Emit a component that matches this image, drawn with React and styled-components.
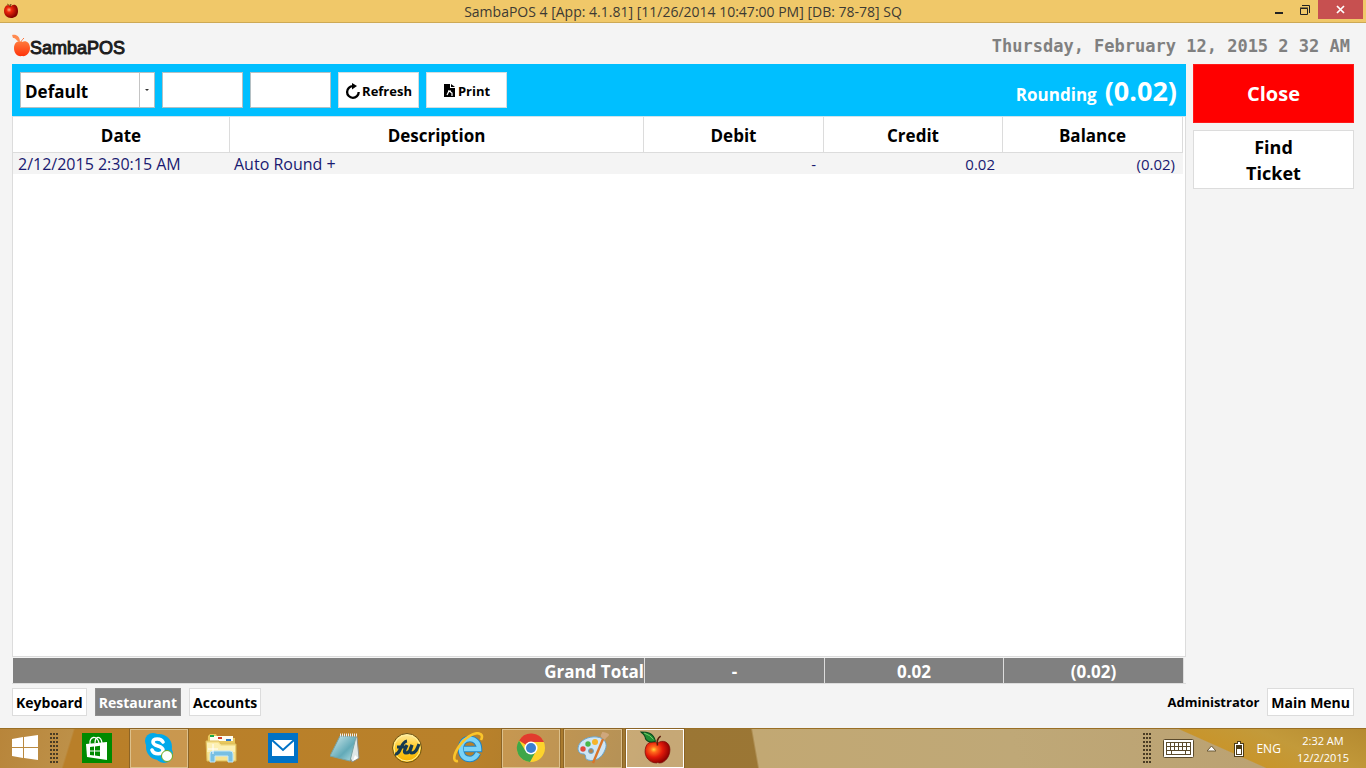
import React from "react";
import styled, { createGlobalStyle, css } from "styled-components";

const GlobalStyle = createGlobalStyle`
  * {
    box-sizing: border-box;
  }
  body {
    margin: 0;
    background: #f4f4f4;
    color: #000;
    font-family: "Open Sans", "Noto Sans", sans-serif;
  }
  button,
  input,
  select {
    font-family: inherit;
    margin: 0;
  }
`;

const Screen = styled.div`
  min-height: 100vh;
  display: flex;
  flex-direction: column;
`;

const TitleBar = styled.header`
  display: grid;
  grid-template-columns: 1fr auto 1fr;
  height: 23px;
  background: #f0c869;
  border-bottom: 1px solid #cda955;
`;

const TitleIcon = styled.div`
  padding: 3px;
  line-height: 0;
`;

const TitleText = styled.div`
  font-size: 14px;
  line-height: 23px;
  color: #3d3a33;
`;

const WindowButtons = styled.div`
  display: flex;
  justify-content: flex-end;
  padding-right: 3px;
`;

const WindowButton = styled.button`
  width: ${(p) => (p.$close ? 45 : 26)}px;
  height: 19px;
  padding: 0;
  border: none;
  background: ${(p) => (p.$close ? "#c75050" : "transparent")};
  line-height: 0;
`;

const Page = styled.main`
  flex: 1;
  display: flex;
  flex-direction: column;
  padding: 0 12px 12px;
`;

const BrandRow = styled.div`
  display: flex;
  justify-content: space-between;
  align-items: center;
  height: 41px;
`;

const Brand = styled.div`
  display: flex;
  align-items: center;
  padding-top: 4px;
`;

const BrandName = styled.span`
  font-family: "Liberation Sans", Arial, sans-serif;
  font-size: 18px;
  line-height: 24px;
  color: #1c1c1c;
  -webkit-text-stroke: 1px #1c1c1c;
  padding-top: 4px;
`;

const Clock = styled.div`
  font-family: "DejaVu Sans Mono", monospace;
  font-weight: bold;
  font-size: 17px;
  line-height: 20px;
  padding: 4px 4px 0 0;
  color: #808080;
`;

const Workspace = styled.div`
  flex: 1;
  display: flex;
  gap: 7px;
`;

const Account = styled.section`
  flex: 1;
  display: flex;
  flex-direction: column;
`;

const Side = styled.aside`
  width: 161px;
  display: flex;
  flex-direction: column;
  gap: 7px;
`;

const SideButton = styled.button`
  height: 59px;
  padding: 0 40px;
  font-size: 18px;
  line-height: 26px;
  font-weight: bold;
  color: #000;
  background: #fff;
  border: 1px solid #dcdcdc;
  ${(p) =>
    p.$danger &&
    css`
      font-size: 20px;
      color: #fff;
      background: #f00;
      border-color: #ff1a1a;
    `}
`;

const Toolbar = styled.div`
  display: flex;
  align-items: center;
  gap: 7px;
  height: 52px;
  padding: 0 8px;
  background: #00bfff;
`;

const SelectBox = styled.label`
  position: relative;
  display: flex;
`;

const Select = styled.select`
  appearance: none;
  width: 135px;
  height: 36px;
  padding: 2px 20px 0 4px;
  font-size: 17px;
  font-weight: bold;
  color: #000;
  border: 1px solid #b4c0c4;
  border-radius: 0;
  background: linear-gradient(#c4c4c4, #c4c4c4) right 14px top / 1px 100%
    no-repeat #fff;
`;

const Arrow = styled.span`
  position: absolute;
  right: 6px;
  top: 17px;
  border: 2px solid transparent;
  border-top-color: #333;
  pointer-events: none;
`;

const DateInput = styled.input`
  width: 81px;
  height: 36px;
  padding: 0 4px;
  font-size: 17px;
  background: #fff;
  border: 1px solid #b4c0c4;
`;

const ToolButton = styled.button`
  display: flex;
  align-items: center;
  justify-content: center;
  gap: 2px;
  width: 81px;
  height: 36px;
  padding: 1px 0 0;
  font-size: 13px;
  font-weight: bold;
  color: #000;
  background: #fff;
  border: 1px solid #d3dde0;
`;

const Summary = styled.div`
  display: flex;
  align-items: center;
  gap: 8px;
  margin-left: auto;
  padding: 2px 1px 0 0;
  color: #fff;
  font-size: 17px;
  line-height: 28px;
  font-weight: bold;
`;

const SummaryLabel = styled.span`
  padding-top: 8px;
`;

const Amount = styled.strong`
  font-size: 27px;
  font-weight: bold;
`;

const Sheet = styled.div`
  flex: 1;
  padding-right: 2px;
  background: #fff;
  border: 1px solid #dcdcdc;
  border-top-color: #cfe3ea;
`;

const Grid = styled.table`
  width: 100%;
  table-layout: fixed;
  border-collapse: separate;
  border-spacing: 0;
`;

const Col = styled.col`
  width: ${(p) => p.$w};
`;

const HeadCell = styled.th`
  height: 36px;
  padding: 3px 0 0;
  font-size: 17px;
  line-height: 24px;
  font-weight: bold;
  border-right: 1px solid #dcdcdc;
  border-bottom: 1px solid #dcdcdc;
`;

const Cell = styled.td`
  height: 21px;
  padding: 1px 8px 0 ${(p) => (p.$first ? 5 : 4)}px;
  font-size: ${(p) => (p.$number ? 15 : 16)}px;
  line-height: 20px;
  color: #191970;
  background: #f4f4f4;
  text-align: ${(p) => (p.$number ? "right" : "left")};
`;

const Totals = styled.div`
  margin-top: 1px;
  padding: 0 2px 0 1px;
  border-bottom: 1px solid #dcdcdc;
`;

const TotalCell = styled.td`
  height: 25px;
  padding: 2px 0 0;
  font-size: 17px;
  line-height: 23px;
  font-weight: bold;
  color: #fff;
  background: #808080;
  text-align: ${(p) => (p.$label ? "right" : "center")};
  border-right: 1px solid #dcdcdc;
`;

const BottomBar = styled.nav`
  display: flex;
  align-items: center;
  gap: 8px;
  margin-top: 4px;
`;

const NavButton = styled.button`
  height: 28px;
  padding: 1px 3px 0;
  font-size: 14px;
  line-height: 25px;
  font-weight: bold;
  color: ${(p) => (p.$active ? "#fff" : "#000")};
  background: ${(p) => (p.$active ? "#808080" : "#fff")};
  border: 1px solid ${(p) => (p.$active ? "#8c8c8c" : "#dcdcdc")};
`;

const User = styled.span`
  margin-left: auto;
  font-size: 13px;
  line-height: 28px;
  font-weight: bold;
`;

const Taskbar = styled.footer`
  display: flex;
  align-items: stretch;
  height: 40px;
  color: #fff;
  border-top: 1px solid #9a6f25;
  background: linear-gradient(
        24deg,
        transparent 32%,
        #c8952c 33%,
        #c39a3a 60%,
        #b58a30 100%
      )
      right / 190px 100% no-repeat,
    linear-gradient(
      80deg,
      transparent 746px,
      #c2a873 748px,
      #bfa877 1000px,
      #b99f70 100%
    ),
    linear-gradient(
      107deg,
      #b8853a 0,
      #bd9048 70px,
      #b97f29 72px,
      #b9812a 460px,
      #9b7634 630px,
      #9b7837 100%
    );
`;

const TaskButton = styled.button`
  display: flex;
  align-items: center;
  justify-content: center;
  width: ${(p) => (p.$start ? 50 : 58)}px;
  margin: ${(p) => (p.$start ? "0" : "0 3px 0 1px")};
  padding: 0 0 2px;
  background: transparent;
  border: 1px solid transparent;
  ${(p) =>
    p.$open &&
    css`
      background: rgba(255, 232, 200, 0.24);
      border-color: #dcc08c;
      outline: 1px solid #8c6426;
    `}
  ${(p) =>
    p.$current &&
    css`
      background: rgba(250, 230, 200, 0.45);
      border-color: #fff;
    `}
`;

const Grip = styled.div`
  align-self: center;
  width: 9px;
  height: 31px;
  margin-right: ${(p) => p.$gap}px;
  background: radial-gradient(circle at 1px 1px, #4a3c24 1px, transparent 1px) 0
    0 / 3px 4px;
`;

const Tray = styled.div`
  display: flex;
  align-items: center;
  margin-left: auto;
  padding-right: 17px;
  font-size: 12px;
  line-height: 17px;
`;

const TrayIcon = styled.span`
  line-height: 0;
  margin-right: ${(p) => p.$gap}px;
`;

const Language = styled.span`
  margin-right: 16px;
`;

const TrayClock = styled.div`
  font-size: 11px;
  text-align: center;
`;

const AppleIcon = ({ size }) => (
  <svg width={size} height={size} viewBox="0 0 32 32">
    <defs>
      <radialGradient id="skin" cx="35%" cy="38%" r="65%">
        <stop offset="0" stopColor="#ffd23a" />
        <stop offset="0.2" stopColor="#ff6a1c" />
        <stop offset="0.55" stopColor="#e31a0a" />
        <stop offset="1" stopColor="#8d0000" />
      </radialGradient>
    </defs>
    <path
      d="M18 12c4-4 12-2 12 6 0 7-5 13-10 13-1 0-2-1-3 0C10 31 5 25 6 18c1-8 8-9 12-6z"
      fill="url(#skin)"
      stroke="#7c0d06"
      strokeWidth="0.7"
    />
    <path
      d="M18 14c-1-4 0-7 3-9"
      fill="none"
      stroke="#5a1c0a"
      strokeWidth="1.6"
    />
    <path
      d="M2 1c5 0 12 0 14 9C10 12 6 9 6 6 5 3 4 3 2 1z"
      fill="#1f8d33"
      stroke="#0b4a1c"
    />
    <path d="M5 2q6 2 9 6" fill="none" stroke="#8fd873" strokeWidth="0.8" />
  </svg>
);

const TitleApple = () => (
  <svg width="16" height="16" viewBox="0 0 16 16">
    <defs>
      <radialGradient id="smallSkin" cx="36%" cy="38%" r="62%">
        <stop offset="0" stopColor="#ffb07a" />
        <stop offset="0.3" stopColor="#f0280c" />
        <stop offset="1" stopColor="#850000" />
      </radialGradient>
    </defs>
    <path
      d="M8 3c4-3 7 0 7 5s-3 7-7 7-7-3-7-7 3-8 7-5z"
      fill="url(#smallSkin)"
    />
    <path d="M7 4l1-3" stroke="#5b1c08" />
    <path d="M4 1l4 2" stroke="#8a6a20" />
  </svg>
);

const BrandApple = () => (
  <svg width="18" height="24" viewBox="0 0 18 24">
    <defs>
      <linearGradient id="brand" x1="0" y1="0" x2="0" y2="1">
        <stop offset="0" stopColor="#ff7a3c" />
        <stop offset="1" stopColor="#ff330a" />
      </linearGradient>
    </defs>
    <path
      d="M10 8c4-2 8 1 8 6s-4 9-8 8C5 23 2 19 2 14s4-8 8-6z"
      fill="url(#brand)"
    />
    <path d="M0 1c4-1 8 1 8 7C4 7 5 5 2 4 0 4 1 2 0 1z" fill="#ff8a50" />
    <path d="M9 9c0-2 1-3 3-5" fill="none" stroke="#ff7038" />
  </svg>
);

const RefreshIcon = () => (
  <svg width="15" height="16" viewBox="0 0 15 16">
    <path
      d="M8 3.2A5.800 5.800 0 1 0 13.700 9"
      fill="none"
      stroke="#000"
      strokeWidth="2.300"
    />
    <path d="M7 0v6.500L12 3z" />
  </svg>
);

const PrintIcon = () => (
  <svg width="13" height="14" viewBox="0 0 13 14">
    <path d="M1 0h6v4h5v9H1z" />
    <path d="M8 0l4 3H8z" />
    <path
      d="M4 11l2-4 3 2v3M5 7h3"
      fill="none"
      stroke="#fff"
      strokeWidth="1.2"
    />
  </svg>
);

const WindowsIcon = () => (
  <svg width="28" height="28" viewBox="0 0 28 28">
    <path
      d="M1 5l11-2v10H1zM13 3l14-2v12H13zM1 14h11v10L1 22zM13 14h14v12l-14-2z"
      fill="#fff"
    />
  </svg>
);

const StoreIcon = () => (
  <svg width="30" height="30" viewBox="0 0 30 30">
    <path d="M0 0h30v30H0z" fill="#008a00" />
    <path d="M4 11l21-2v18L5 24z" fill="#fff" />
    <path
      d="M8 11c-1-8 7-9 9-1M13 10c0-8 6-7 7 0"
      fill="none"
      stroke="#fff"
      strokeWidth="1.300"
    />
    <path
      d="M8 14l4-.5v4H8zM13 13.400l5-.6v4.700h-5zM8 18.500h4v4l-4-.5zM13 18.500h5v4.700l-5-.6z"
      fill="#008a00"
    />
  </svg>
);

const SkypeIcon = () => (
  <svg width="32" height="32" viewBox="0 0 32 32">
    <circle cx="10" cy="9" r="8" fill="#00a9ea" />
    <circle cx="21" cy="22" r="9" fill="#00a9ea" />
    <circle cx="16" cy="15" r="13" fill="#00a9ea" />
    <path
      d="M20 10c-2-4-10-4-10 0 0 5 10 3 10 8 0 5-9 5-11 0"
      fill="none"
      stroke="#fff"
      strokeWidth="3.600"
      strokeLinecap="round"
    />
    <circle cx="24" cy="24" r="5.500" fill="#fff" stroke="#6da81c" />
  </svg>
);

const ExplorerIcon = () => (
  <svg width="32" height="30" viewBox="0 0 32 30">
    <path d="M3 3l2-2h6l1 2h7l1 2h10v19H2z" fill="#e8c75c" />
    <path d="M5 3h23v5H5z" fill="#fffdf0" />
    <path d="M5 2h4v2H5z" fill="#18a848" />
    <path d="M13 4h4v2h-4z" fill="#d23c2c" />
    <path d="M21 6h5v2h-5z" fill="#2d78c8" />
    <path d="M1 8h13l2 3h15v17H2z" fill="#f7e391" stroke="#dcbc58" />
    <path d="M2 10h11l3 3h14v6H2z" fill="#fcf0b4" />
    <path
      d="M5 29v-8q0-3 3-3h17q3 0 3 3v8h-5v-6H10v6z"
      fill="#78bfe2"
      stroke="#c4e8f8"
    />
    <path d="M8 11v10M3 16h10" stroke="#fff" />
  </svg>
);

const MailIcon = () => (
  <svg width="30" height="30" viewBox="0 0 30 30">
    <path d="M0 0h30v30H0z" fill="#0072c6" />
    <path d="M4 7h22v16H4z" fill="#fff" />
    <path d="M4 7l11 10L26 7" fill="none" stroke="#0072c6" strokeWidth="2" />
  </svg>
);

const NotepadIcon = () => (
  <svg width="30" height="30" viewBox="0 0 30 30">
    <defs>
      <linearGradient id="pad" x1="0" y1="0" x2="1" y2="1">
        <stop offset="0" stopColor="#d8eef0" />
        <stop offset="0.6" stopColor="#62aab8" />
        <stop offset="1" stopColor="#b9e2e6" />
      </linearGradient>
    </defs>
    <path d="M11 3l16 1 2 21-7 4z" fill="#dfe7e7" stroke="#8b8f8b" />
    <path d="M10 3l16 1-6 24L0 23z" fill="url(#pad)" stroke="#78a3a4" />
    <path d="M10 2h17" stroke="#eee" strokeWidth="3" strokeDasharray="1 1" />
    <path d="M23 28l2-6 3 3z" fill="#fff" />
  </svg>
);

const FireworksIcon = () => (
  <svg width="32" height="32" viewBox="0 0 32 32">
    <defs>
      <linearGradient id="coin" x1="0" y1="0" x2="0" y2="1">
        <stop offset="0" stopColor="#ffeaa0" />
        <stop offset="0.5" stopColor="#ffca22" />
        <stop offset="1" stopColor="#f5b200" />
      </linearGradient>
    </defs>
    <circle cx="16" cy="16" r="14.500" fill="url(#coin)" stroke="#6b5215" />
    <circle cx="16" cy="16" r="13" fill="none" stroke="#fff0a0" />
    <path
      d="M4 22c6 1 5-12 12-13M6 15h8M16 13c-2 4-4 8-1 8s5-4 6-8c-2 4-3 8 0 8 4 0 5-4 7-9"
      fill="none"
      stroke="#173b50"
      strokeWidth="3.200"
    />
  </svg>
);

const InternetExplorerIcon = () => (
  <svg width="32" height="32" viewBox="0 0 32 32">
    <path
      d="M25 21c-2 4-5 6-8 6-6 0-9-4-9-10 0-7 4-10 9-10s9 4 9 10H11"
      fill="none"
      stroke="#2084c4"
      strokeWidth="6.500"
    />
    <path
      d="M25 21c-2 4-5 6-8 6-6 0-9-4-9-10 0-7 4-10 9-10s9 4 9 10H11"
      fill="none"
      stroke="#7bd3f7"
      strokeWidth="4.500"
    />
    <path
      d="M5 29c-5 1-5-5 0-13C11 6 22-1 27 2c3 1 2 4 1 6"
      fill="none"
      stroke="#fbc52b"
      strokeWidth="2.600"
    />
  </svg>
);

const ChromeIcon = () => (
  <svg width="30" height="30" viewBox="0 0 30 30">
    <circle cx="15" cy="15" r="14" fill="#fdd32c" />
    <path d="M15 15L3 7.500A14 14 0 0 1 28 9H15z" fill="#e23b2e" />
    <path d="M3 7.500A14 14 0 0 0 14 29l6-11-11-1z" fill="#3fa648" />
    <circle cx="15" cy="15" r="6.500" fill="#fff" />
    <circle cx="15" cy="15" r="5" fill="#3b7fd0" />
  </svg>
);

const PaintIcon = () => (
  <svg width="32" height="32" viewBox="0 0 32 32">
    <path
      d="M1 16C2 8 12 4 20 5c8 1 11 7 8 13-3 8-10 12-17 10-4-1-1-5-4-6-3 0-6-1-6-6z"
      fill="#cfe6f5"
      stroke="#6aa5cc"
    />
    <circle cx="14" cy="19" r="2.500" fill="#b3834e" stroke="#6aa5cc" />
    <circle cx="6" cy="17" r="2.700" fill="#e14a3c" />
    <circle cx="11" cy="12" r="2.700" fill="#49b749" />
    <circle cx="18" cy="10" r="3" fill="#f6b42a" />
    <path d="M26 7L16 31" stroke="#d9752a" strokeWidth="2.400" />
    <path d="M28 8l-4-3c-1-3 2-4 1-5 3 0 8 2 7 3-1 2-3 2-4 5z" fill="#cfa77c" />
  </svg>
);

const KeyboardIcon = () => (
  <svg width="31" height="19" viewBox="0 0 31 19">
    <rect
      x="0.500"
      y="0.500"
      width="30"
      height="18"
      rx="1"
      fill="#fff"
      stroke="#5a4a2c"
    />
    <path d="M3 3h25v13H3z" fill="#5a4a2c" />
    <path
      d="M4 5.500h23M4 9.500h23"
      stroke="#fff"
      strokeWidth="3"
      strokeDasharray="3 1"
    />
    <path d="M4 13.500h4M9 13.500h13M23 13.500h4" stroke="#fff" strokeWidth="3" />
  </svg>
);

const BatteryIcon = () => (
  <svg width="10" height="16" viewBox="0 0 10 16">
    <path d="M3 0h4v2h3v14H0V2h3z" fill="#4d3c18" />
    <path d="M4 1h2v2h3v12H1V3h3z" fill="#fff" />
    <path d="M2 4h6v10H2z" fill="#4d3c18" />
    <path d="M3 8h4v5H3z" fill="#fff" />
  </svg>
);

const columns = [
  { name: "Date", width: "217px" },
  { name: "Description", width: "auto" },
  { name: "Debit", width: "180px" },
  { name: "Credit", width: "179px" },
  { name: "Balance", width: "180px" },
];

const tasks = [
  { name: "Store", icon: <StoreIcon /> },
  { name: "Skype", icon: <SkypeIcon />, open: true },
  { name: "File Explorer", icon: <ExplorerIcon /> },
  { name: "Mail", icon: <MailIcon /> },
  { name: "Notepad", icon: <NotepadIcon /> },
  { name: "Fireworks", icon: <FireworksIcon /> },
  { name: "Internet Explorer", icon: <InternetExplorerIcon /> },
  { name: "Chrome", icon: <ChromeIcon />, open: true },
  { name: "Paint", icon: <PaintIcon />, open: true },
  { name: "SambaPOS", icon: <AppleIcon size={33} />, open: true, current: true },
];

const Columns = () => (
  <colgroup>
    {columns.map((c) => (
      <Col key={c.name} $w={c.width} />
    ))}
  </colgroup>
);

const App = () => {
  return (
    <Screen>
      <GlobalStyle />
      <TitleBar>
        <TitleIcon>
          <TitleApple />
        </TitleIcon>
        <TitleText>
          SambaPOS 4 [App: 4.1.81] [11/26/2014 10:47:00 PM] [DB: 78-78] SQ
        </TitleText>
        <WindowButtons>
          <WindowButton aria-label="Minimize">
            <svg width="8" height="12">
              <path d="M0 8h8v2H0z" fill="#222" />
            </svg>
          </WindowButton>
          <WindowButton aria-label="Restore">
            <svg width="10" height="10" fill="none" stroke="#222">
              <path d="M.5 3.500h7v6h-7zM0 3h8M2 .5h7.500V8" />
            </svg>
          </WindowButton>
          <WindowButton $close aria-label="Close window">
            <svg width="9" height="9" stroke="#fff" strokeWidth="1.700">
              <path d="M1 1l7 7M8 1L1 8" />
            </svg>
          </WindowButton>
        </WindowButtons>
      </TitleBar>

      <Page>
        <BrandRow>
          <Brand>
            <BrandApple />
            <BrandName>SambaPOS</BrandName>
          </Brand>
          <Clock>Thursday, February 12, 2015 2 32 AM</Clock>
        </BrandRow>

        <Workspace>
          <Account>
            <Toolbar>
              <SelectBox>
                <Select aria-label="Filter" defaultValue="Default">
                  <option>Default</option>
                </Select>
                <Arrow />
              </SelectBox>
              <DateInput aria-label="Start date" />
              <DateInput aria-label="End date" />
              <ToolButton>
                <RefreshIcon />
                Refresh
              </ToolButton>
              <ToolButton>
                <PrintIcon />
                Print
              </ToolButton>
              <Summary>
                <SummaryLabel>Rounding</SummaryLabel>
                <Amount>(0.02)</Amount>
              </Summary>
            </Toolbar>
            <Sheet>
              <Grid>
                <Columns />
                <thead>
                  <tr>
                    {columns.map((c) => (
                      <HeadCell key={c.name}>{c.name}</HeadCell>
                    ))}
                  </tr>
                </thead>
                <tbody>
                  <tr>
                    <Cell $first>2/12/2015 2:30:15 AM</Cell>
                    <Cell>Auto Round +</Cell>
                    <Cell $number>-</Cell>
                    <Cell $number>0.02</Cell>
                    <Cell $number>(0.02)</Cell>
                  </tr>
                </tbody>
              </Grid>
            </Sheet>
            <Totals>
              <Grid>
                <Columns />
                <tbody>
                  <tr>
                    <TotalCell $label colSpan={2}>
                      Grand Total
                    </TotalCell>
                    <TotalCell>-</TotalCell>
                    <TotalCell>0.02</TotalCell>
                    <TotalCell>(0.02)</TotalCell>
                  </tr>
                </tbody>
              </Grid>
            </Totals>
          </Account>
          <Side>
            <SideButton $danger>Close</SideButton>
            <SideButton>Find Ticket</SideButton>
          </Side>
        </Workspace>

        <BottomBar>
          <NavButton>Keyboard</NavButton>
          <NavButton $active>Restaurant</NavButton>
          <NavButton>Accounts</NavButton>
          <User>Administrator</User>
          <NavButton>Main Menu</NavButton>
        </BottomBar>
      </Page>

      <Taskbar>
        <TaskButton $start aria-label="Start">
          <WindowsIcon />
        </TaskButton>
        <Grip $gap={8} />
        {tasks.map((t) => (
          <TaskButton
            key={t.name}
            aria-label={t.name}
            $open={t.open}
            $current={t.current}
          >
            {t.icon}
          </TaskButton>
        ))}
        <Tray>
          <Grip $gap={11} />
          <TrayIcon $gap={13}>
            <KeyboardIcon />
          </TrayIcon>
          <TrayIcon $gap={18}>
            <svg width="9" height="6">
              <path d="M0 5l4.500-5L9 5z" fill="#fff" stroke="#6b5a38" />
            </svg>
          </TrayIcon>
          <TrayIcon $gap={12}>
            <BatteryIcon />
          </TrayIcon>
          <Language>ENG</Language>
          <TrayClock>
            <div>2:32 AM</div>
            <div>12/2/2015</div>
          </TrayClock>
        </Tray>
      </Taskbar>
    </Screen>
  );
};

export default App;
